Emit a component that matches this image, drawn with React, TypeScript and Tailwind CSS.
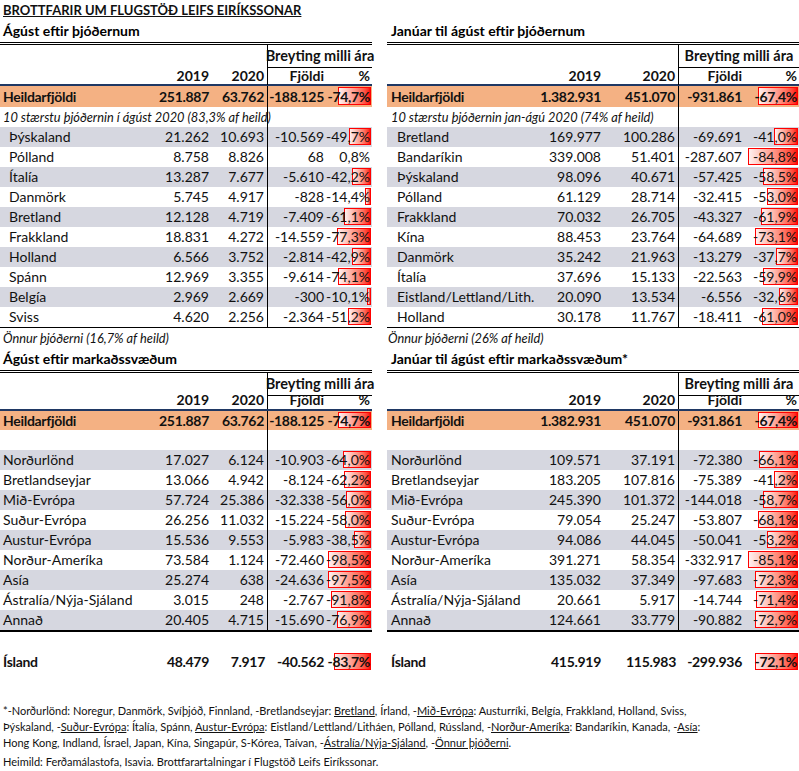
import React from "react"

type Row = [string, string, string, string, string, number]

const topLeft: Row[] = [
  ["Þýskaland", "21.262", "10.693", "-10.569", "-49,7%", -49.7],
  ["Pólland", "8.758", "8.826", "68", "0,8%", 0.8],
  ["Ítalía", "13.287", "7.677", "-5.610", "-42,2%", -42.2],
  ["Danmörk", "5.745", "4.917", "-828", "-14,4%", -14.4],
  ["Bretland", "12.128", "4.719", "-7.409", "-61,1%", -61.1],
  ["Frakkland", "18.831", "4.272", "-14.559", "-77,3%", -77.3],
  ["Holland", "6.566", "3.752", "-2.814", "-42,9%", -42.9],
  ["Spánn", "12.969", "3.355", "-9.614", "-74,1%", -74.1],
  ["Belgía", "2.969", "2.669", "-300", "-10,1%", -10.1],
  ["Sviss", "4.620", "2.256", "-2.364", "-51,2%", -51.2],
]

const topRight: Row[] = [
  ["Bretland", "169.977", "100.286", "-69.691", "-41,0%", -41.0],
  ["Bandaríkin", "339.008", "51.401", "-287.607", "-84,8%", -84.8],
  ["Þýskaland", "98.096", "40.671", "-57.425", "-58,5%", -58.5],
  ["Pólland", "61.129", "28.714", "-32.415", "-53,0%", -53.0],
  ["Frakkland", "70.032", "26.705", "-43.327", "-61,9%", -61.9],
  ["Kína", "88.453", "23.764", "-64.689", "-73,1%", -73.1],
  ["Danmörk", "35.242", "21.963", "-13.279", "-37,7%", -37.7],
  ["Ítalía", "37.696", "15.133", "-22.563", "-59,9%", -59.9],
  ["Eistland/Lettland/Lith.", "20.090", "13.534", "-6.556", "-32,6%", -32.6],
  ["Holland", "30.178", "11.767", "-18.411", "-61,0%", -61.0],
]

const bottomLeft: Row[] = [
  ["Norðurlönd", "17.027", "6.124", "-10.903", "-64,0%", -64.0],
  ["Bretlandseyjar", "13.066", "4.942", "-8.124", "-62,2%", -62.2],
  ["Mið-Evrópa", "57.724", "25.386", "-32.338", "-56,0%", -56.0],
  ["Suður-Evrópa", "26.256", "11.032", "-15.224", "-58,0%", -58.0],
  ["Austur-Evrópa", "15.536", "9.553", "-5.983", "-38,5%", -38.5],
  ["Norður-Ameríka", "73.584", "1.124", "-72.460", "-98,5%", -98.5],
  ["Asía", "25.274", "638", "-24.636", "-97,5%", -97.5],
  ["Ástralía/Nýja-Sjáland", "3.015", "248", "-2.767", "-91,8%", -91.8],
  ["Annað", "20.405", "4.715", "-15.690", "-76,9%", -76.9],
]

const bottomRight: Row[] = [
  ["Norðurlönd", "109.571", "37.191", "-72.380", "-66,1%", -66.1],
  ["Bretlandseyjar", "183.205", "107.816", "-75.389", "-41,2%", -41.2],
  ["Mið-Evrópa", "245.390", "101.372", "-144.018", "-58,7%", -58.7],
  ["Suður-Evrópa", "79.054", "25.247", "-53.807", "-68,1%", -68.1],
  ["Austur-Evrópa", "94.086", "44.045", "-50.041", "-53,2%", -53.2],
  ["Norður-Ameríka", "391.271", "58.354", "-332.917", "-85,1%", -85.1],
  ["Asía", "135.032", "37.349", "-97.683", "-72,3%", -72.3],
  ["Ástralía/Nýja-Sjáland", "20.661", "5.917", "-14.744", "-71,4%", -71.4],
  ["Annað", "124.661", "33.779", "-90.882", "-72,9%", -72.9],
]

const heildLeft: Row = ["Heildarfjöldi", "251.887", "63.762", "-188.125", "-74,7%", -74.7]
const heildRight: Row = ["Heildarfjöldi", "1.382.931", "451.070", "-931.861", "-67,4%", -67.4]

function PctCell({ text, value, scale }: { text: string; value: number; scale: number }) {
  return (
    <div className="relative pr-[2px] text-right">
      {value < 0 && (
        <div
          className="absolute right-px top-px bottom-[2px] border border-[#ff0000] bg-linear-to-l from-[#ff0000] to-[#fff0f0]"
          style={{ width: Math.round(Math.abs(value) * scale) }}
        />
      )}
      <span className="relative">{text}</span>
    </div>
  )
}

interface TableProps {
  cols: string
  scale: number
  labelPad: string
  rowPad: string
  title: string
  note?: string
  rows: Row[]
  heild: Row
  compact?: boolean
  thickBottom?: boolean
}

function Table({ cols, scale, labelPad, rowPad, title, note, rows, heild, compact, thickBottom }: TableProps) {
  return (
    <div>
      <div className={`h-[22px] ${labelPad} text-[14px] font-bold leading-[22px] text-black`}>{title}</div>
      <div className="border-t-[3px] border-double border-black" />
      {/* header */}
      <div className={`grid ${cols} ${compact ? "h-[17px]" : "h-[21px]"} text-[14.5px] font-bold`}>
        <div className="col-span-3 border-r border-black" />
        <div className="col-span-2 flex items-center justify-center border-b border-black whitespace-nowrap">
          Breyting milli ára
        </div>
      </div>
      <div className={`grid ${cols} ${compact ? "h-[21px]" : "h-[20px]"} border-b-2 border-[#1f3864] text-[14px] font-bold leading-[19px]`}>
        <div />
        <div className="pr-px text-right">2019</div>
        <div className="border-r border-black pr-[3px] text-right">2020</div>
        <div className="pr-[2px] text-right">Fjöldi</div>
        <div className="pr-[2px] text-right">%</div>
      </div>
      <div
        className={`grid ${cols} ${compact ? "h-[19px] leading-[19px]" : "h-[21px] leading-[21px]"} bg-[#f4b183] text-[14px] font-bold tracking-[-0.3px]`}
      >
        <div className={labelPad}>{heild[0]}</div>
        <div className="pr-px text-right">{heild[1]}</div>
        <div className="border-r border-black pr-[3px] text-right">{heild[2]}</div>
        <div className="pr-[2px] text-right">{heild[3]}</div>
        <PctCell text={heild[4]} value={heild[5]} scale={scale} />
      </div>
      <div className={`grid ${cols} h-[20px] text-[12.8px] italic leading-[20px]`}>
        <div className="col-span-3 border-r border-black">
          <span className={`${labelPad} whitespace-nowrap`}>{note}</span>
        </div>
        <div className="col-span-2" />
      </div>
      <div className={thickBottom ? "border-b-2 border-black" : "border-b border-black"}>
        {rows.map((r, i) => (
          <div
            key={r[0]}
            className={`grid ${cols} h-[20px] text-[14px] leading-[20px] ${i % 2 === 0 ? "bg-[#d6d7e0]" : "bg-white"}`}
          >
            <div className={`${rowPad} whitespace-nowrap`}>{r[0]}</div>
            <div className="pr-px text-right">{r[1]}</div>
            <div className="border-r border-black pr-[3px] text-right">{r[2]}</div>
            <div className="pr-[2px] text-right">{r[3]}</div>
            <PctCell text={r[4]} value={r[5]} scale={scale} />
          </div>
        ))}
      </div>
    </div>
  )
}

function IslandRow({ cols, labelPad, row, scale }: { cols: string; labelPad: string; row: Row; scale: number }) {
  return (
    <div className={`mt-[20px] grid ${cols} h-[20px] text-[14px] font-bold leading-[20px] tracking-[-0.3px]`}>
      <div className={labelPad}>{row[0]}</div>
      <div className="pr-px text-right">{row[1]}</div>
      <div className="pr-[3px] text-right">{row[2]}</div>
      <div className="pr-[2px] text-right">{row[3]}</div>
      <PctCell text={row[4]} value={row[5]} scale={scale} />
    </div>
  )
}

const U = ({ children }: { children: React.ReactNode }) => <span className="underline">{children}</span>

export default function App() {
  const leftCols = "grid-cols-[152px_58px_58px_58px_46px]"
  const rightCols = "grid-cols-[153px_62px_77px_65px_55px]"

  return (
    <div className="h-[771px] w-[799px] overflow-hidden bg-white font-[Lato,'Noto_Sans',sans-serif] text-[#111]">
      <div className="h-[20px] pl-[3px] text-[13px] font-bold leading-[20px] underline">
        BROTTFARIR UM FLUGSTÖÐ LEIFS EIRÍKSSONAR
      </div>

      {/* eftir þjóðernum */}
      <div className="flex gap-[15px]">
        <div className="w-[372px]">
          <Table
            cols={leftCols}
            scale={0.44}
            labelPad="pl-[3px]"
            rowPad="pl-[9px]"
            title="Ágúst eftir þjóðernum"
            note="10 stærstu þjóðernin í ágúst 2020 (83,3% af heild)"
            rows={topLeft}
            heild={heildLeft}
          />
          <div className="h-[20px] pl-[3px] text-[12.8px] italic leading-[20px]">Önnur þjóðerni (16,7% af heild)</div>
        </div>
        <div className="w-[412px]">
          <Table
            cols={rightCols}
            scale={0.59}
            labelPad="pl-[4px]"
            rowPad="pl-[10px]"
            title="Janúar til ágúst eftir þjóðernum"
            note="10 stærstu þjóðernin jan-ágú 2020 (74% af heild)"
            rows={topRight}
            heild={heildRight}
          />
          <div className="h-[20px] pl-px text-[12.8px] italic leading-[20px]">Önnur þjóðerni (26% af heild)</div>
        </div>
      </div>

      {/* eftir markaðssvæðum */}
      <div className="flex gap-[15px]">
        <div className="w-[372px]">
          <Table
            cols={leftCols}
            scale={0.44}
            labelPad="pl-[3px]"
            rowPad="pl-[3px]"
            title="Ágúst eftir markaðssvæðum"
            rows={bottomLeft}
            heild={heildLeft}
            compact
            thickBottom
          />
          <IslandRow cols={leftCols} labelPad="pl-[3px]" row={["Ísland", "48.479", "7.917", "-40.562", "-83,7%", -83.7]} scale={0.44} />
        </div>
        <div className="w-[412px]">
          <Table
            cols={rightCols}
            scale={0.59}
            labelPad="pl-[4px]"
            rowPad="pl-[4px]"
            title="Janúar til ágúst eftir markaðssvæðum*"
            rows={bottomRight}
            heild={heildRight}
            compact
            thickBottom
          />
          <IslandRow cols={rightCols} labelPad="pl-[4px]" row={["Ísland", "415.919", "115.983", "-299.936", "-72,1%", -72.1]} scale={0.59} />
        </div>
      </div>

      {/* skýringar */}
      <div className="mt-[31px] pl-[3px] text-[11px] leading-[16px]">
        <div className="whitespace-nowrap">
          *-Norðurlönd: Noregur, Danmörk, Svíþjóð, Finnland, -Bretlandseyjar: <U>Bretland</U>, Írland, -<U>Mið-Evrópa</U>:
          Austurríki, Belgía, Frakkland, Holland, Sviss,
        </div>
        <div className="whitespace-nowrap">
          Þýskaland, -<U>Suður-Evrópa</U>: Ítalía, Spánn, <U>Austur-Evrópa</U>: Eistland/Lettland/Litháen, Pólland, Rússland,
          -<U>Norður-Ameríka</U>: Bandaríkin, Kanada, -<U>Asía</U>:
        </div>
        <div className="whitespace-nowrap">
          Hong Kong, Indland, Ísrael, Japan, Kína, Singapúr, S-Kórea, Taívan, -<U>Ástralía/Nýja-Sjáland</U>, -
          <U>Önnur þjóðerni</U>.
        </div>
        <div className="mt-[3px] whitespace-nowrap">Heimild: Ferðamálastofa, Isavia. Brottfarartalningar í Flugstöð Leifs Eiríkssonar.</div>
      </div>
    </div>
  )
}
